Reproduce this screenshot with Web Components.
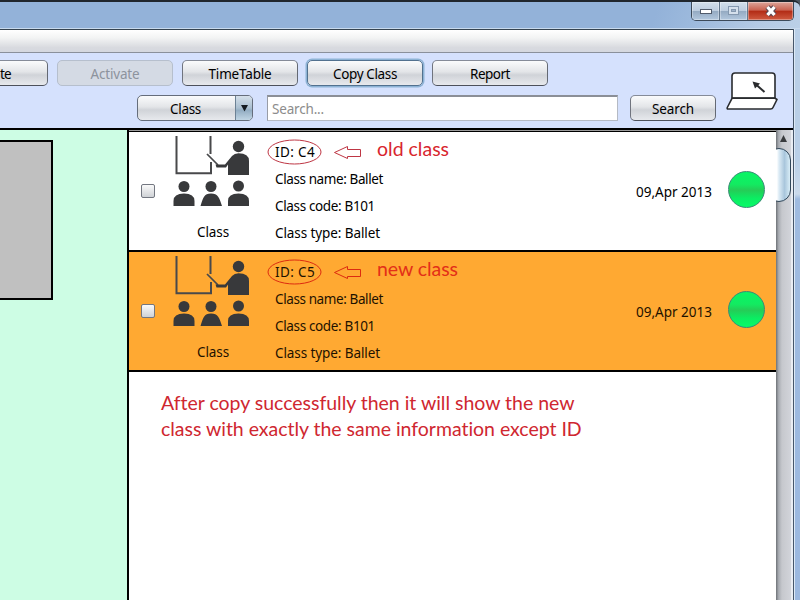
<!DOCTYPE html>
<html lang="en"><head><meta charset="utf-8"><title>Classes</title>
<style>html,body{margin:0;width:800px;height:600px;overflow:hidden}</style></head><body>
<class-window></class-window>
<script>
const define=(name,html,after)=>customElements.define(name,class extends HTMLElement{
  connectedCallback(){
    if(this.shadowRoot)return;
    this.attachShadow({mode:'open'}).innerHTML=typeof html==='function'?html(this):html;
    if(after)after(this);
  }
});
/* Text spaced to a given width */
define('fit-text','<style>:host{display:inline-block;white-space:nowrap;text-align:left}span{display:inline-block}</style><span><slot></slot></span>',el=>{
  const s=el.shadowRoot.querySelector('span'),w=+el.getAttribute('w');
  el.style.width=w+'px';
  const n=el.textContent.length;
  s.style.letterSpacing=(w-s.getBoundingClientRect().width)/n+'px';
});
define('push-button',`<style>
:host{display:flex;box-sizing:border-box;height:26px;align-items:center;justify-content:center;border:1px solid #70747e;border-color:#858b98 #646973 #4d515b #70747e;border-radius:5px;background:linear-gradient(#fafbfc,#e3e5e8 45%,#d0d3d8 58%,#e7e9ed);color:#000;padding-top:2px}
:host([disabled]){color:#8d939d;border-color:#b6bfcd;background:#d4dae4}
:host([focused]){border-color:#52718f;box-shadow:0 0 0 1.5px #8db3d5}
</style><slot></slot>`);
define('drop-down',`<style>
:host{display:flex;box-sizing:border-box;width:116px;height:26px;border:1px solid #656d7b;border-radius:5px;overflow:hidden;background:linear-gradient(#fafbfc,#e3e5e8 45%,#d0d3d8 58%,#e7e9ed)}
div{flex:1;display:flex;align-items:center;justify-content:center;padding-top:2px;padding-right:2px}
i{width:16px;border-left:1px solid #6c8194;background:linear-gradient(#d5e0ea,#aabfd0 50%,#93adc2 60%,#c0d5e4);display:flex;justify-content:center;align-items:center}
svg{display:block}
</style><div><slot></slot></div><i><svg width="7" height="7"><path d="M0 0H7L3.500 6.500Z" fill="#151b21"/></svg></i>`);
define('search-field',`<style>:host{display:flex;align-items:center;box-sizing:border-box;width:351px;height:26px;background:#fff;border:1px solid #b5bac4;border-top:2px solid #8b8f97;border-left-color:#989ca5;padding:1px 4px 0;color:#8c8c8c}</style><slot></slot>`);
define('laptop-icon',`<style>:host,svg{display:block}</style><svg width="52" height="40" viewBox="0 0 52 40" fill="#fff" stroke="#292b2e" stroke-width="1.6" stroke-linejoin="round"><path d="M6 27V5Q6 2 9 2H46Q49 2 49 5V27Z"/><path d="M6 27.3H49L51 28.5 47 36.5Q46.400 38 44.500 38H2Q.8 38 1.300 36.500Z"/><path d="M38.500 21 30 13.500" stroke-width="2"/><path d="M26.500 10.500 34 12.500 29 17.500Z" fill="#292b2e" stroke="none"/></svg>`);
define('class-picture',`<style>:host,svg{display:block}</style><svg width="80" height="72" viewBox="0 0 80 72"><g fill="none" stroke="#48494b" stroke-width="2"><path d="M6.500 0V37.200H41V26M40.500 0V18"/><path d="M37 18 48 29" stroke-width="1.700"/></g><g fill="#38393b"><circle cx="68.500" cy="10.500" r="5.700"/><path d="M45.500 28.500H55L62 20Q64.500 17.300 68.500 17.300 79 17.300 79 25V39H58V28.500L56 31.500H46.500Z"/><circle cx="14" cy="50.500" r="5.500"/><circle cx="41" cy="50.500" r="5.500"/><circle cx="68.500" cy="50" r="5.500"/><path d="M3.500 70V65Q3.500 57.500 14 57.500T24.500 65V70ZM30.500 70C33 62 34 57.500 41 57.500S49.500 62 52 70ZM58 70V65Q58 57.500 68.500 57.500T79 65V70Z"/></g></svg>`);
define('class-row',el=>`<style>
:host{display:grid;grid-template-columns:38px 100px 1fr 92px 48px;box-sizing:border-box;height:120px;border-bottom:2px solid #000;background:#fff;color:#000;padding-left:0}
:host([selected]){background:#ffa932;color:#1e1200}
.c{display:block;width:12px;height:12px;margin:52px 0 0 12px;border:1px solid #737781;border-radius:2px;background:linear-gradient(#fafafa,#cfd2d6)}
.p{padding:4px 0 0 3px}.p fit-text{display:block;margin:15px 0 0 27px;line-height:18px}
.t{display:flex;flex-direction:column;padding:6px 0 0 8px}
.l{height:27px;display:flex;align-items:center}
.id{position:relative}.id svg{position:absolute;left:-10px;top:0}
.note{margin-left:62px;color:#d8262e;font:19.5px/24px Lato,sans-serif;position:relative;top:-3px}
:host([selected]) .note{color:#e32f18}
.d{padding-top:50px;line-height:20px}
b{display:block;box-sizing:border-box;width:37px;height:37px;margin-top:39px;border:1px solid #398b75;border-radius:50%;background:linear-gradient(#08f565,#13eb61 35%,#25cc57 52%,#0bed62 75%,#08fa68)}
</style><span class="c"></span>
<div class="p"><class-picture></class-picture><fit-text w="32">Class</fit-text></div>
<div class="t"><div class="l id"><svg width="100" height="30" fill="none" stroke="${el.hasAttribute('selected')?'#dd2b10':'#be3644'}" stroke-width="1"><ellipse cx="29.500" cy="14" rx="26.500" ry="12"/><path d="M69.500 14.500 82.500 8.500V11.500H95.500V18.500H82.500V20.500Z"/></svg><fit-text w="40">${el.getAttribute('code')}</fit-text><fit-text class="note" w="${el.hasAttribute('selected')?81:72}">${el.getAttribute('note')}</fit-text></div>
<div class="l"><fit-text w="108">Class name: Ballet</fit-text></div><div class="l"><fit-text w="100">Class code: B101</fit-text></div><div class="l"><fit-text w="105">Class type: Ballet</fit-text></div></div>
<div class="d"><fit-text w="76">09,Apr 2013</fit-text></div><b></b>`);
define('scroll-bar',`<style>:host{display:block;box-sizing:border-box;width:15px;background:linear-gradient(90deg,#6e7277,#a9adb3 18%,#c6c8cd 40%,#d2d4da);padding-top:5px;overflow:hidden}
svg{display:block;margin-left:3px}div{box-sizing:border-box;width:24px;height:54px;margin:5px 0 0 -9px;border:1.5px solid #31475a;border-radius:12px;background:linear-gradient(90deg,#fff 40%,#dcebf5 50%,#a9c6dc 75%,#d8edf7)}
</style><svg width="9" height="8"><path d="M4.500 0 8 7H1Z" fill="#393b3e"/></svg><div></div>`);
define('caption-buttons',`<style>:host{display:flex;box-sizing:border-box;width:103px;height:19px;border:1px solid #3c4a5a;border-top:0;border-radius:0 0 5px 5px;overflow:hidden}
div{display:flex;align-items:center;justify-content:center;border-right:1px solid #64788d;width:27px;background:linear-gradient(#d3dfeb,#bdcddf 48%,#93a9c1 50%,#b3c8de);box-shadow:inset 0 0 0 1px #ffffff55}
div.x{flex:1;border:0;background:linear-gradient(#dda59a,#c9604e 46%,#b22b15 50%,#cf5b41)}svg{display:block}
div:first-child svg{margin-top:4px}
</style><div><svg width="14" height="9"><rect x="1.500" y="2.500" width="11" height="4" fill="#fff" stroke="#515b6b"/></svg></div><div><svg width="14" height="12" fill="#d5e0ec" stroke="#8498af"><rect x="1.500" y="1.500" width="10" height="8"/><rect x="4.500" y="4.500" width="4" height="2" fill="#9fb3ca"/></svg></div><div class="x"><svg width="14" height="12"><path d="M3.500 2 10.500 10M10.500 2 3.500 10" stroke="#5b4650" stroke-width="5.500"/><path d="M3.500 2 10.500 10M10.500 2 3.500 10" stroke="#fff" stroke-width="3.300"/></svg></div>`);
define('class-window',`<style>
:host{display:grid;grid-template-rows:29px 24px 75px 472px;grid-template-columns:793px 7px;width:800px;height:600px;box-sizing:border-box;background:#fff;font:13.5px/18px "Noto Sans",sans-serif;overflow:hidden}
.title{display:flex;justify-content:flex-end;padding-right:6px;border-top:2px solid #20262d;border-bottom:1px solid #c8daee;box-sizing:border-box;background:linear-gradient(110deg,#93b2d9 620px,#9dbadd 660px,#b4cae4 720px,#bbd0e7);border-radius:0 7px 0 0}
.corner{background:#4a5661;grid-column:1/3;display:grid}
.menu{box-sizing:border-box;border-top:1px solid #354350;border-bottom:1px solid #8a909b;background:linear-gradient(#fff,#f3f4f4 35%,#d8dadf 80%,#d5d8df)}
.edge{grid-column:2;grid-row:2/5;border-left:1px solid #46566a;background:linear-gradient(90deg,#dce9f6 1px,transparent 1px),linear-gradient(#b9cfe7 130px,#cbdaeb 165px,#9fbbe0 170px,#9bb8df)}
.tools{grid-column:1;grid-row:3;background:#d5e1fd;display:grid;grid-template-columns:718px 75px}
.bars{display:grid;grid-template-rows:35px 40px;padding-top:0}
.one{display:flex;gap:9px;padding-top:7px;overflow:hidden}.one push-button{width:116px;flex:none}.one .cut{width:48px;border-left:0;border-radius:0 5px 5px 0;justify-content:flex-start}
.two{display:flex;padding:7px 0 0 137px}.two search-field{margin-left:14px}.two push-button{margin-left:12px;width:86px}
laptop-icon{margin:18px 0 0 8px}
.body{grid-column:1;grid-row:4;display:grid;grid-template-columns:127px 2px 647px 15px 2px;border-top:2px solid #000;box-sizing:border-box}
.side{background:#cdfde4;padding-top:10px}.box{box-sizing:border-box;width:53px;height:160px;border:2px solid #000;border-left:0;background:#c0c0c0}
.line{background:#000}.list{padding-top:2px;background:linear-gradient(#9b9b9b 1px,#000 1px 2px,#fff 2px)}
.msg{margin:18px 0 0 32px;color:#cf2730;font:19.5px/26px Lato,sans-serif;display:flex;flex-direction:column}.pad{background:#e9edf3}
</style>
<div class="corner"><div class="title"><caption-buttons></caption-buttons></div></div><div class="menu"></div><div class="edge"></div>
<div class="tools"><div class="bars"><div class="one"><push-button class="cut"><fit-text w="11">te</fit-text></push-button><push-button disabled><fit-text w="49">Activate</fit-text></push-button><push-button><fit-text w="63">TimeTable</fit-text></push-button><push-button focused><fit-text w="64">Copy Class</fit-text></push-button><push-button><fit-text w="40">Report</fit-text></push-button></div>
<div class="two"><drop-down><fit-text w="31">Class</fit-text></drop-down><search-field><fit-text w="52">Search...</fit-text></search-field><push-button><fit-text w="42">Search</fit-text></push-button></div></div><laptop-icon></laptop-icon></div>
<div class="body"><div class="side"><div class="box"></div></div><div class="line"></div><div class="list"><class-row code="ID: C4" note="old class"></class-row><class-row selected code="ID: C5" note="new class"></class-row><div class="msg"><fit-text w="413">After copy successfully then it will show the new</fit-text><fit-text w="421">class with exactly the same information except ID</fit-text></div></div><scroll-bar></scroll-bar><div class="pad"></div></div>`);
</script></body></html>
